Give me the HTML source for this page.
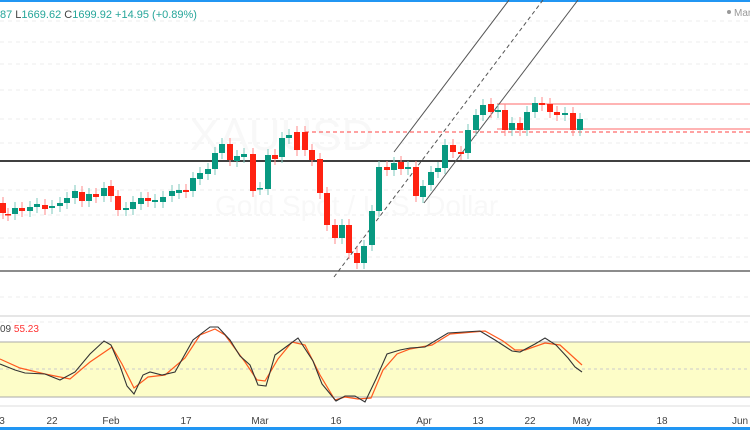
<!DOCTYPE html>
<html><head><meta charset="utf-8"><style>
html,body{margin:0;padding:0;background:#fff;width:750px;height:430px;overflow:hidden;font-family:"Liberation Sans",sans-serif}
</style></head><body>
<svg width="750" height="430" viewBox="0 0 750 430" xmlns="http://www.w3.org/2000/svg" font-family="Liberation Sans, sans-serif">
<rect x="0" y="0" width="750" height="2" fill="#2196f3"/>
<g stroke="#ececec" stroke-dasharray="4,4" stroke-width="1">
<line x1="0" y1="21" x2="750" y2="21"/><line x1="0" y1="42" x2="750" y2="42"/><line x1="0" y1="64" x2="750" y2="64"/><line x1="0" y1="90" x2="750" y2="90"/><line x1="0" y1="119" x2="750" y2="119"/><line x1="0" y1="143" x2="750" y2="143"/><line x1="0" y1="190" x2="750" y2="190"/><line x1="0" y1="215" x2="750" y2="215"/><line x1="0" y1="238" x2="750" y2="238"/><line x1="0" y1="257" x2="750" y2="257"/><line x1="0" y1="297" x2="750" y2="297"/><line x1="0" y1="322" x2="750" y2="322"/>
</g>
<text x="190" y="150" font-size="44" fill="#f8f8f8">XAUUSD</text>
<text x="215" y="215" font-size="28" fill="#f8f8f8">Gold Spot / U.S. Dollar</text>
<text x="0" y="18" font-size="11" fill="#26a69a">87 <tspan fill="#444">L</tspan>1669.62 <tspan fill="#444">C</tspan>1699.92 +14.95 (+0.89%)</text>
<circle cx="729" cy="12" r="2" fill="#999"/><text x="734" y="16" font-size="10" fill="#999">Mark</text>
<line x1="0" y1="161" x2="750" y2="161" stroke="#000" stroke-width="1.5"/>
<line x1="0" y1="271" x2="750" y2="271" stroke="#666" stroke-width="1.5"/>
<line x1="305" y1="132" x2="750" y2="132" stroke="#f44" stroke-dasharray="4,3"/>
<line x1="497" y1="104" x2="750" y2="104" stroke="#f88" stroke-width="1.3"/>
<line x1="497" y1="129" x2="750" y2="129" stroke="#f88" stroke-width="1.3"/>
<line x1="394" y1="152" x2="509" y2="0" stroke="#555"/>
<line x1="424" y1="203" x2="578" y2="0" stroke="#555"/>
<line x1="334" y1="277" x2="543" y2="0" stroke="#555" stroke-dasharray="4,3"/>
<line x1="0" y1="316" x2="750" y2="316" stroke="#ccc"/>
<rect x="0" y="342" width="750" height="55" fill="#fdfdc8"/>
<line x1="0" y1="342" x2="750" y2="342" stroke="#aaa"/>
<line x1="0" y1="397" x2="750" y2="397" stroke="#aaa"/>
<line x1="0" y1="369" x2="750" y2="369" stroke="#ccc" stroke-dasharray="3,3"/>
<text x="0" y="332" font-size="10" fill="#444">09 <tspan fill="#f33">55.23</tspan></text>
<polyline fill="none" stroke="#ff5a1f" stroke-width="1.2" points="0,359 20,368 45,374 55,376 70,379 90,362 112,347 122,364 134,388 148,377 165,375 185,358 200,335 215,329 225,335 245,362 257,380 265,381 278,359 292,342 305,345 320,375 335,400 345,397 358,399 371,398 383,370 397,354 410,349 432,345 450,334 485,331 503,341 515,350 525,350 545,343 560,345 582,365"/>
<polyline fill="none" stroke="#333" stroke-width="1.1" points="0,364 15,370 25,373 45,374 60,380 75,372 90,354 104,341 111,345 120,366 127,386 134,394 143,375 150,372 162,375 175,372 193,340 210,327 218,327 230,340 240,356 250,365 258,385 266,386 275,355 298,338 313,361 322,384 336,401 345,396 355,396 365,402 376,379 387,354 400,350 410,348 425,347 448,333 480,331 495,340 512,351 520,352 535,344 545,338 556,345 568,358 575,367 582,372"/>
<line x1="0" y1="406" x2="750" y2="406" stroke="#ddd"/>
<g font-size="10" fill="#444" text-anchor="middle">
<text x="2" y="424">3</text><text x="52" y="424">22</text><text x="111" y="424">Feb</text><text x="186" y="424">17</text><text x="260" y="424">Mar</text><text x="336" y="424">16</text><text x="424" y="424">Apr</text><text x="478" y="424">13</text><text x="530" y="424">22</text><text x="582" y="424">May</text><text x="662" y="424">18</text><text x="740" y="424">Jun</text>
</g>
<rect x="0" y="427" width="750" height="3" fill="#2196f3"/>
<g id="cc"></g>
</svg>
<script>
var d=[[3,203,213,0],[8,214,215,0],[15,214,208,1],[22,208,211,0],[30,211,207,1],[37,207,204,1],[45,205,209,0],[52,208,206,1],[60,206,203,1],[67,203,198,1],[75,198,191,1],[82,192,201,0],[89,201,194,1],[96,194,197,0],[104,196,188,1],[111,186,196,0],[118,196,210,0],[126,210,208,1],[133,209,202,1],[141,204,198,1],[148,198,201,0],[155,202,200,1],[163,202,197,1],[172,196,191,1],[179,193,190,1],[186,190,192,0],[193,191,178,1],[200,179,173,1],[208,174,169,1],[215,169,153,1],[222,153,144,1],[230,144,160,0],[237,161,156,1],[244,157,154,1],[253,154,191,0],[260,189,188,1],[268,189,155,1],[275,155,159,0],[282,157,138,1],[289,138,135,1],[297,132,150,0],[305,132,150,0],[312,150,160,0],[320,159,193,0],[327,193,225,0],[335,225,238,0],[342,238,225,1],[349,225,253,0],[357,253,263,0],[364,263,246,1],[372,245,211,1],[379,211,167,1],[387,167,170,0],[394,170,163,1],[401,162,169,0],[408,169,167,1],[416,167,196,0],[423,197,186,1],[431,185,172,1],[438,172,168,1],[445,168,145,1],[453,145,152,0],[461,152,154,0],[468,153,130,1],[476,130,115,1],[483,115,105,1],[491,104,112,0],[498,112,110,1],[505,110,130,0],[512,130,123,1],[520,123,130,0],[527,130,112,1],[535,112,103,1],[542,103,105,0],[550,104,112,0],[557,112,115,0],[565,115,113,1],[573,113,130,0],[580,130,119,1]];
var s='';d.forEach(function(c){var col=c[3]?'#089981':'#f21';var t=Math.min(c[1],c[2]),b=Math.max(c[1],c[2]);s+='<line x1="'+c[0]+'" x2="'+c[0]+'" y1="'+(t-6)+'" y2="'+(b+6)+'" stroke="'+(c[3]?'#7cc8bd':'#f88')+'"/><rect x="'+(c[0]-3)+'" y="'+t+'" width="6" height="'+Math.max(1.5,b-t)+'" fill="'+col+'"/>';});
document.getElementById('cc').innerHTML=s;
</script>
</body></html>
